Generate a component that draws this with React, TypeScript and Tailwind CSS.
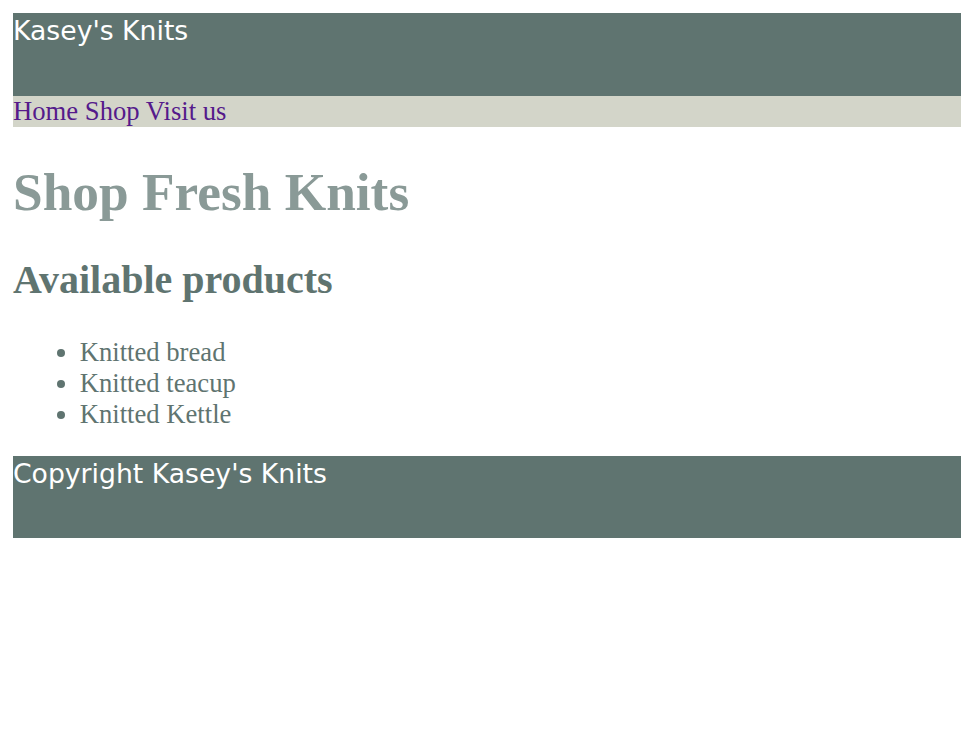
import React from "react";

export default function App() {
  return (
    <div className="min-h-[748px] bg-white pl-[13px] pt-[13px] font-['Liberation_Serif','Times_New_Roman',serif] text-[26.67px] leading-[normal]">
      <header className="h-[83px] bg-[#5f7470] pt-[2px] font-['DejaVu_Sans','Verdana',sans-serif] text-[26.67px] leading-[normal] text-white">
        Kasey's Knits
      </header>
      <nav className="bg-[#d3d5c9] text-[#551a8b]">
        <a href="#home" className="text-[#551a8b]">Home</a>{" "}
        <a href="#shop" className="text-[#551a8b]">Shop</a>{" "}
        <a href="#visit" className="text-[#551a8b]">Visit us</a>
      </nav>
      <main>
        <h1 className="mt-[33.7px] text-[53.33px] font-bold leading-[normal] text-[#8a9a97]">
          Shop Fresh Knits
        </h1>
        <h2 className="mt-[33.7px] text-[40px] font-bold leading-[normal] text-[#5f7470]">
          Available products
        </h2>
        <ul className="mt-[33.2px] list-disc pl-[66.67px] text-[#5f7470]">
          <li>Knitted bread</li>
          <li>Knitted teacup</li>
          <li>Knitted Kettle</li>
        </ul>
      </main>
      <footer className="mt-[26.5px] h-[81.5px] bg-[#5f7470] pt-[2px] font-['DejaVu_Sans','Verdana',sans-serif] text-[26.67px] leading-[normal] text-white">
        Copyright Kasey's Knits
      </footer>
    </div>
  );
}
